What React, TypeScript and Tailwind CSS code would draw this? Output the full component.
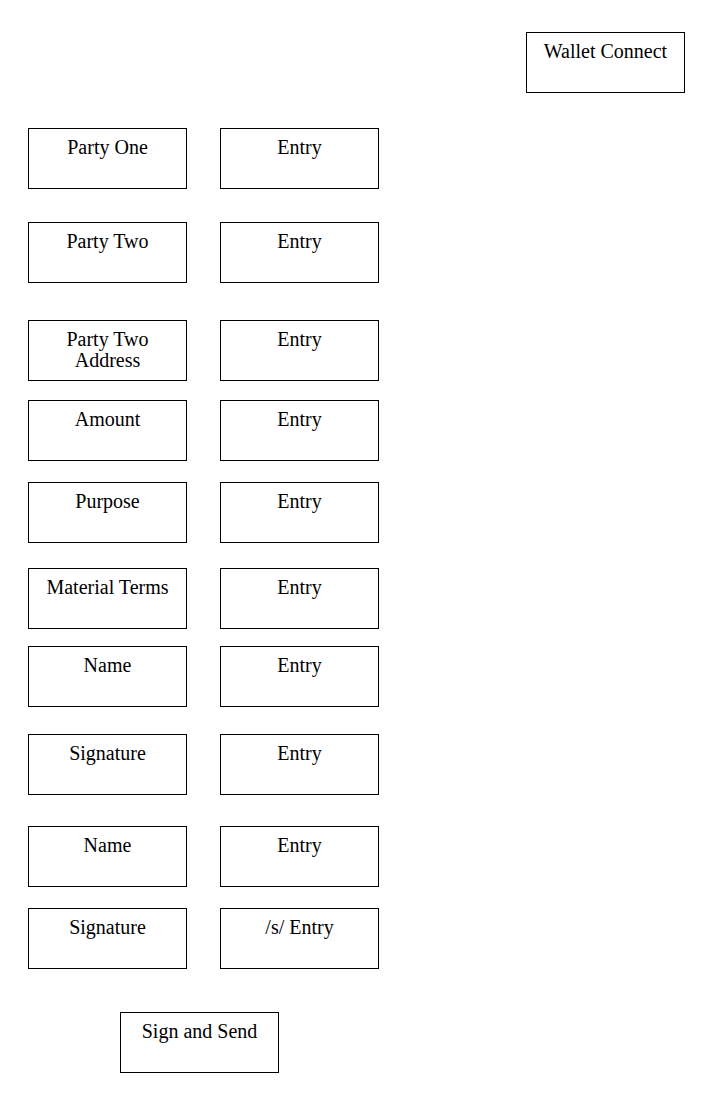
import React from 'react';

type Row = { label: string; value: string; mt: string };

const rows: Row[] = [
  { label: 'Party One', value: 'Entry', mt: 'mt-[35px]' },
  { label: 'Party Two', value: 'Entry', mt: 'mt-[33px]' },
  { label: 'Party Two Address', value: 'Entry', mt: 'mt-[37px]' },
  { label: 'Amount', value: 'Entry', mt: 'mt-[19px]' },
  { label: 'Purpose', value: 'Entry', mt: 'mt-[21px]' },
  { label: 'Material Terms', value: 'Entry', mt: 'mt-[25px]' },
  { label: 'Name', value: 'Entry', mt: 'mt-[17px]' },
  { label: 'Signature', value: 'Entry', mt: 'mt-[27px]' },
  { label: 'Name', value: 'Entry', mt: 'mt-[31px]' },
  { label: 'Signature', value: '/s/ Entry', mt: 'mt-[21px]' },
];

function Box({ children }: { children: React.ReactNode }) {
  return (
    <div className="w-[159px] h-[61px] border border-black px-[10px] pt-[8px] text-center text-[20px] leading-[21px] text-black">
      {children}
    </div>
  );
}

export default function App() {
  return (
    <div
      className="min-h-[1112px] w-[708px] bg-white pt-[32px]"
      style={{ fontFamily: '"Liberation Serif", "Times New Roman", serif' }}
    >
      <div className="flex justify-end pr-[23px]">
        <Box>Wallet Connect</Box>
      </div>

      <div className="pl-[28px]">
        {rows.map((r, i) => (
          <div key={i} className={`flex gap-[33px] ${r.mt}`}>
            <Box>{r.label}</Box>
            <Box>{r.value}</Box>
          </div>
        ))}
      </div>

      <div className="mt-[43px] pl-[120px]">
        <Box>Sign and Send</Box>
      </div>
    </div>
  );
}
